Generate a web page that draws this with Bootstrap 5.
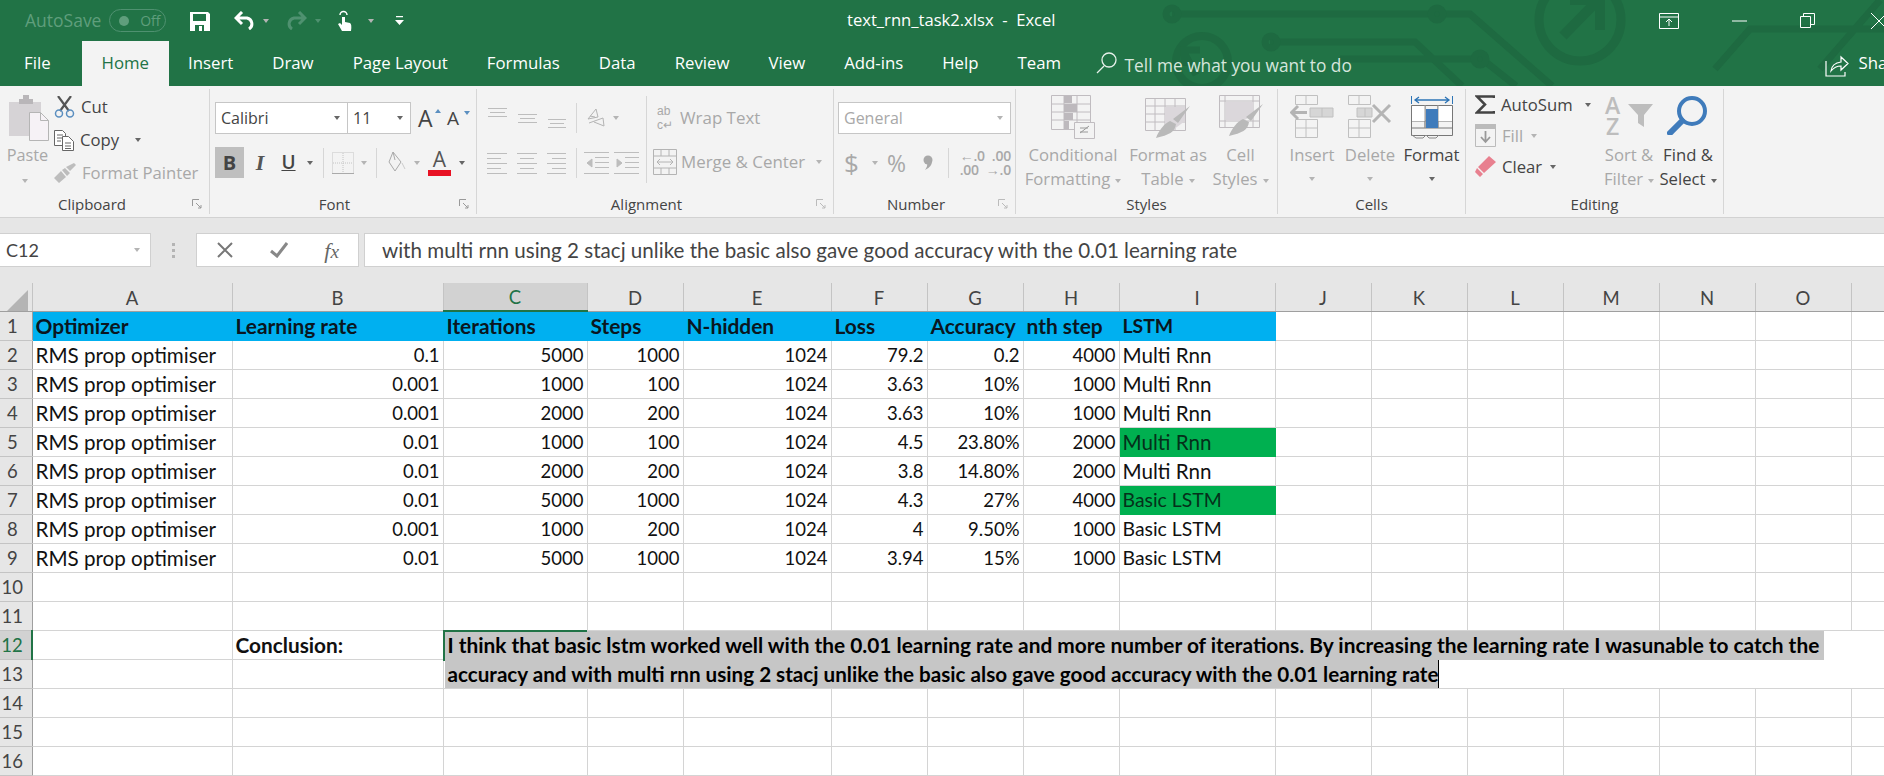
<!DOCTYPE html>
<html lang="en"><head><meta charset="utf-8"><title>text_rnn_task2.xlsx - Excel</title>
<link href="https://cdn.jsdelivr.net/npm/bootstrap@5.3.0/dist/css/bootstrap.min.css" rel="stylesheet">
<style>
html,body{height:776px;overflow:hidden}
body{width:1884px;background:#fff;font-family:"Open Sans","Noto Sans",sans-serif;font-size:16.7px;color:#444}
svg{flex:none;display:block}
.xl-head{background:#217346;height:86px;color:#fff;overflow:hidden}
.xl-deco{position:absolute;left:0;top:0;pointer-events:none}
.xl-title{height:41px;position:relative}
.xl-qa{width:847px;padding-left:25px;flex:none}
.xl-auto{color:#5f9e7c;font-size:17.5px}
.xl-pill{width:57px;height:23px;border:1px solid #4f9170;border-radius:12px;margin-left:8px;color:#5f9e7c;font-size:14px;padding:0 5px 0 9px}
.xl-pill i{width:10px;height:10px;border-radius:50%;background:#5f9e7c;display:block}
.xl-doc{font-size:16.6px;white-space:pre}
.xl-win{margin-left:auto}
.xl-tabs{height:45px;position:relative;font-size:16.8px;padding-left:4.5px}
.xl-tab{padding:0 19.5px;height:45px;line-height:44px;white-space:nowrap;flex:none}
.xl-tab.first{margin-right:12px}
.xl-tab.on{background:#f3f3f3;color:#217346}
.xl-ask{color:#d6e6dd;font-size:17.3px;margin-left:8px;width:700px;line-height:50px;flex:none}
.xl-share{font-size:16.8px;margin-left:10px;white-space:nowrap;line-height:44px;flex:none}
.xl-ribbon{height:132px;background:#f3f3f3;border-bottom:1px solid #d2d2d2;padding-top:3px}
.rb-g{height:125px;border-right:1px solid #d6d6d6;flex:none}
.rb-body{height:105px}
.rb-label{height:20px;line-height:20px;font-size:15px;color:#444}
.rb-label span{flex:1;text-align:center}
.rb-label svg{margin:5px 7px 0 0}
.w-clip{width:210px}.w-font{width:267px}.w-align{width:357px}.w-num{width:182px}.w-sty{width:262px}.w-cell{width:188px}.w-edit{width:258px}
.lbl-clip span{padding-right:8px}
.off{color:#a8a8a8}
.cr{display:block;flex:none;width:0;height:0;border:3.5px solid transparent;border-top:4px solid #666;border-bottom:0}
.cr.lt{border-top-color:#b4b4b4}
.sp{width:1px;height:30px;background:#d6d6d6;flex:none}
.paste-col{width:54px;padding-left:1px;flex:none}
.paste-col svg{margin:6px 0 0 7px}
.paste-t{margin-top:4px;line-height:20px;text-align:center;font-size:16.3px}
.paste-col .cr{margin:14px 0 0 21px}
.clip-rows{padding-top:1px}
.clip-row{height:33px;white-space:nowrap}
.clip-row .tx{margin-left:6px}
.row-a{height:32px;margin-top:13px}
.row-b{height:31px;margin-top:13px}
.combo{height:32px;border:1px solid #c6c6c6;background:#fff;font-size:16px;padding:0 7px 0 5px;justify-content:space-between;flex:none}
.c-font{width:133px}.c-size{width:64px;margin-left:-1px}.c-num{width:173px;color:#a8a8a8}
.big-a{font-size:23px;line-height:1;width:20px;position:relative;color:#444}
.small-a{font-size:19px;line-height:1;width:18px;color:#444;position:relative}
.tip{position:absolute;right:-3px;top:2px;width:0;height:0;border:3px solid transparent;border-bottom:4px solid #5b8fc0;border-top:0}
.tip.dn{border-bottom:0;border-top:4px solid #5b8fc0;right:-5px}
.b-b{width:29px;height:31px;background:#bfbfbf;font-weight:700;font-size:20px;color:#444;line-height:31px;text-align:center}
.b-i{width:16px;font-family:"Liberation Serif",serif;font-style:italic;font-weight:700;font-size:22px;text-align:center;color:#555}
.b-u{width:15px;font-size:19px;font-weight:600;text-decoration:underline;text-align:center;color:#444}
.a-red{width:23px;height:31px;text-align:center;font-size:21px;line-height:25px;color:#555;position:relative}
.a-red:after{content:"";position:absolute;left:0;right:0;bottom:2px;height:6px;background:#e81123}
.al-left{width:169px;padding-left:10px;flex:none}
.al-right{border-left:1px solid #d6d6d6;height:87px;margin-top:7px;flex:1;font-size:16.9px;white-space:nowrap}
.al-right .row-a{margin-top:6px}.al-right .row-b{margin-top:12px}
.abc{width:20px;font-family:"Liberation Sans",sans-serif;font-size:12px;line-height:14px;color:#a8a8a8;flex:none}
.dollar{font-size:26px;color:#a8a8a8;line-height:30px;width:15px}
.pct{font-size:23px;color:#a8a8a8;line-height:30px;width:22px}
.dec{font-size:14px;font-weight:600;color:#a8a8a8;line-height:14px;white-space:pre;text-align:right;width:54px;letter-spacing:-.2px}
.bigbtn{flex:none;text-align:center;line-height:24px;white-space:nowrap}
.bigbtn .ico{height:54px;padding-top:6px}
.bigbtn .ico svg{margin:0 auto}
.bigbtn .cr{display:inline-block;vertical-align:middle;margin-left:5px}
.bigbtn .solo{display:block;margin:10px auto 0}
.w108{width:108px}.w82{width:82px}.w63{width:63px}.w58{width:58px}.w60{width:60px}.w65{width:65px}
.st-pad{padding-left:3px}.ce-pad{padding-left:5px}
.ed-rows{width:134px;padding-left:9px;flex:none}
.ed-row{height:31px;white-space:nowrap}
.ed-row .tx{margin-left:6px}
.sortico{justify-content:center;padding-left:3px}
.az{font-size:23px;line-height:21px;font-weight:600;color:#bdbdbd;width:19px;text-align:center}
.xl-fbar{height:65px;background:#e6e6e6;padding-top:15px;font-family:Lato,sans-serif;font-size:20.6px;color:#444}
.fb-box{height:34px;background:#fff;border:1px solid #d0d0d0;flex:none}
.fb-name{width:151px;border-left:0;padding:0 10px 0 6px;justify-content:space-between;font-size:18px}
.fb-dots{width:45px;height:34px;flex:none}
.fb-btns{width:163px;justify-content:space-between;padding:0 19px 0 20px}
.fb-input{margin-left:5px;flex:1;padding-left:17px;border-right:0;white-space:nowrap}
.fx{font-family:"Liberation Serif",serif;font-style:italic;font-size:22px;color:#666}
.xl-sheet{table-layout:fixed;width:1884px;margin:0;border-collapse:collapse;font-family:Lato,sans-serif;font-size:20.6px;color:#000}
.xl-sheet th,.xl-sheet td{padding:0 3px;height:29px;line-height:28px;background-color:#fff;border:0;border-right:1px solid #d4d4d4;border-bottom:1px solid #d4d4d4;box-shadow:none;white-space:nowrap;font-weight:400;color:#111}
.xl-sheet tr.hd th{height:28px;line-height:26px;background-color:#e6e6e6;border-right-color:#c4c4c4;border-bottom:1px solid #9f9f9f;text-align:center;color:#444;font-size:18.5px;padding:0}
.xl-sheet tr.hd th.sel{background-color:#d2d2d2;border-bottom:2px solid #217346;color:#217346}
.xl-sheet th.rh{background-color:#e6e6e6;border-right:1px solid #9f9f9f;border-bottom-color:#c4c4c4;color:#444;text-align:center;padding:0 7px 0 0;font-size:18.5px}
.xl-sheet th.rh.sel{background-color:#d2d2d2;border-right:2px solid #217346;color:#217346}
.xl-sheet td.num{text-align:right;padding-right:3px;font-size:18.5px}
.xl-sheet td.bl{background-color:#00b0f0;border-color:#00b0f0;font-weight:700;color:#0a1620;font-size:20.9px}
.xl-sheet td.gr{background-color:#00b050;border-color:#00b050;color:#05301a}
.xl-sheet td.b{font-weight:700;font-size:20.8px}
.xl-sheet td.cap{font-size:19.4px}
.xl-sheet td.merged{vertical-align:top;padding:0 0 0 1px;position:relative;font-weight:700;border-right:0}
.active-t{position:absolute;left:-1px;top:-1px;width:144px;height:2px;background:#217346}
.active-l{position:absolute;left:-1px;top:-1px;width:2px;height:31px;background:#217346}
.seltx{display:block;width:fit-content;height:29px;line-height:28px;background:#c6c6c6;padding:0 5px 0 3px;color:#000;font-size:20.87px}
.seltx.two{height:28px;border-right:1px solid #000;padding-right:0;font-size:20.65px}
.corner{width:0;height:0;border-style:solid;border-width:0 0 21px 21px;border-color:transparent transparent #b4b4b4 transparent;margin:3px 0 0 7px}
.c32{width:32px}.c200{width:200px}.c211{width:211px}.c144{width:144px}.c96{width:96px}.c148{width:148px}.c156{width:156px}.c33{width:33px}
.g3{margin-left:3px}.g4{margin-left:4px}.g5{margin-left:5px}.g6{margin-left:6px}.g7{margin-left:7px}.g8{margin-left:8px}.g9{margin-left:9px}.g10{margin-left:10px}.g11{margin-left:11px}.g12{margin-left:12px}.g13{margin-left:13px}.g14{margin-left:14px}.g15{margin-left:15px}.g17{margin-left:17px}.g21{margin-left:21px}
.xl-p5{padding-left:5px}.xl-p4{padding-left:4px}
.xl-gap1{margin-left:53px}.xl-gap2{margin-left:53px}.xl-gap3{margin-left:55px;margin-right:-3px}
.xl-dim{border-top-color:#4f9170}
.xl-mag{margin:11px 0 0 15px}
.xl-shr{margin-top:11px}
</style></head><body>
<header class="xl-head position-relative">
<svg class="xl-deco" width="1884" height="86" fill="none" stroke="#1e6a41" stroke-width="7"><path d="M1172 14H1470L1552 86M1270 42H1415L1462 86M1340 59H1482L1516 86"/><circle cx="1172" cy="14" r="6"/><circle cx="1437" cy="14" r="6"/><circle cx="1271" cy="42" r="6"/><circle cx="1480" cy="59" r="6"/><circle cx="1580" cy="20" r="41" stroke-width="9"/><circle cx="1202" cy="62" r="26" stroke-width="8"/><path d="M1563 36L1598 0M1570 0H1600V30" stroke-width="10"/><path d="M1196 75L1184 52M1184 66V50H1200" stroke-width="7"/><path d="M1715 69L1750 29H1884M1820 69L1880 0"/></svg>
<div class="xl-title d-flex align-items-center">
<div class="xl-qa d-flex align-items-center">
<span class="xl-auto">AutoSave</span>
<span class="xl-pill d-flex align-items-center justify-content-between"><i></i>Off</span>
<svg class="ms-4" width="20" height="20" viewBox="0 0 20 20"><path fill="#fff" d="M0 1h18l2 2v17H0z"/><path fill="#217346" d="M3 3h13v7H3zM5 14h9v6H5z"/><path fill="#fff" d="M9 15h3v5H9z"/></svg>
<svg class="ms-4" width="21" height="19" viewBox="0 0 21 19" fill="none" stroke="#fff" stroke-width="3"><path d="M8 1L2 7l6 6M2 7h11a6 6 0 0 1 2 11"/></svg>
<span class="cr lt ms-2"></span>
<svg class="g17" width="21" height="19" viewBox="0 0 21 19" fill="none" stroke="#4f9170" stroke-width="3"><path d="M13 1l6 6-6 6M19 7H8a6 6 0 0 0-2 11"/></svg>
<span class="cr ms-2 xl-dim"></span>
<svg class="ms-3" width="15" height="21" viewBox="0 0 15 21" fill="#fff"><path d="M5 7h3v5l5 1q2 1 1 8H5L1 14l2-1 2 2z"/><path d="M3 5a3.500 3.500 0 1 1 7 0" fill="none" stroke="#fff" stroke-width="1.500"/></svg>
<span class="cr lt ms-3"></span>
<svg class="g21" width="9" height="9" viewBox="0 0 9 9" fill="#fff"><path d="M1 0h7v1.200H1zM0 4h9L4.500 9z"/></svg>
</div>
<span class="xl-doc">text_rnn_task2.xlsx  -  Excel</span>
<div class="xl-win d-flex align-items-center">
<svg width="20" height="16" viewBox="0 0 20 16" fill="none" stroke="#fff"><path d="M.5.500h19v15H.5zM.5 4h19M10 13V6M7 9l3-3 3 3"/></svg>
<svg width="15" height="2" viewBox="0 0 15 2" class="xl-gap1"><path d="M0 1h15" stroke="#fff"/></svg>
<svg width="15" height="15" viewBox="0 0 15 15" fill="none" stroke="#fff" class="xl-gap2"><path d="M.5 3.500h10v11H.5zM3.500 3.500v-3h11v11h-4"/></svg>
<svg width="17" height="16" viewBox="0 0 17 16" fill="none" stroke="#fff" class="xl-gap3"><path d="M1 0l16 16M17 0L1 16"/></svg>
</div></div>
<nav class="xl-tabs d-flex align-items-start">
<span class="xl-tab first">File</span><span class="xl-tab on">Home</span><span class="xl-tab">Insert</span><span class="xl-tab">Draw</span><span class="xl-tab">Page Layout</span><span class="xl-tab">Formulas</span><span class="xl-tab">Data</span><span class="xl-tab">Review</span><span class="xl-tab">View</span><span class="xl-tab">Add-ins</span><span class="xl-tab">Help</span><span class="xl-tab">Team</span>
<svg class="xl-mag" width="21" height="22" viewBox="0 0 21 22" fill="none" stroke="#e6f0ea" stroke-width="1.300"><circle cx="13" cy="8" r="7"/><path d="M8 14L1 21"/></svg>
<span class="xl-ask">Tell me what you want to do</span>
<svg class="xl-shr" width="24" height="25" viewBox="0 0 24 25" fill="none" stroke="#fff" stroke-width="1.200"><path d="M1 9v15h19v-4M6 19q1-8 10-9V5l7 6.500-7 6.500v-4q-6 0-10 5z"/></svg>
<span class="xl-share">Share</span>
</nav>
</header>

<section class="xl-ribbon d-flex">
<div class="rb-g w-clip d-flex flex-column">
<div class="rb-body d-flex">
<div class="paste-col">
<svg width="41" height="46" viewBox="0 0 41 46"><path fill="#d6d3d6" d="M1 7h12V4h3V0h5v4h3v3h9v34H1z"/><path fill="#b9b6b9" d="M11 4h14v5H11zM15 0h6v5h-6z"/><path fill="#f6f2f6" stroke="#b5b5b5" d="M21.500 17.500h11l8 8v20h-19z"/><path fill="none" stroke="#b5b5b5" d="M32.500 17.500v8h8"/></svg>
<div class="paste-t off">Paste</div><span class="cr lt"></span>
</div>
<div class="clip-rows">
<div class="clip-row d-flex align-items-center"><svg width="21" height="22" viewBox="0 0 21 22" fill="none"><path d="M4 0l11 15M17 0L6 15" stroke="#555" stroke-width="2.200"/><circle cx="5" cy="17.500" r="3.500" stroke="#5b8fc0" stroke-width="1.500"/><circle cx="16" cy="17.500" r="3.500" stroke="#5b8fc0" stroke-width="1.500"/></svg><span class="tx">Cut</span></div>
<div class="clip-row d-flex align-items-center"><svg width="20" height="22" viewBox="0 0 20 22" fill="#fff" stroke="#666"><path d="M.5 1.500h8l3 3v12H.5z"/><path d="M8.500 7.500h6l5 5v9h-11z"/><path d="M3 6h6M3 9h6M3 12h4M11 14h6M11 17h6M11 19.500h6" fill="none"/></svg><span class="tx">Copy</span><span class="cr ms-3"></span></div>
<div class="clip-row d-flex align-items-center off"><svg width="22" height="20" viewBox="0 0 22 20" fill="#bdbdbd"><path d="M0 15l5 5 7-6-5-6zM8 7l5 6 3-3-5-5zM12 4l4 4 6-6-2-2z"/></svg><span class="tx">Format Painter</span></div>
</div></div>
<div class="rb-label lbl-clip d-flex"><span>Clipboard</span><svg width="10" height="10" viewBox="0 0 10 10" fill="none" stroke="#999"><path d="M.5 7V.5H7M4 4l5 5M6 9h3V6"/></svg></div>
</div>
<div class="rb-g w-font d-flex flex-column">
<div class="rb-body xl-p5">
<div class="row-a d-flex align-items-center">
<div class="combo c-font d-flex align-items-center">Calibri<span class="cr"></span></div>
<div class="combo c-size d-flex align-items-center">11<span class="cr"></span></div>
<span class="big-a g7 d-block">A<i class="tip"></i></span><span class="small-a g9 d-block">A<i class="tip dn"></i></span>
</div>
<div class="row-b d-flex align-items-center">
<span class="b-b">B</span><span class="b-i g8">I</span><span class="b-u g13">U</span><span class="cr g11"></span><span class="sp g10"></span>
<svg class="g8" width="22" height="22" viewBox="0 0 22 22" fill="none" stroke="#c4c4c4" stroke-dasharray="1 1"><path d="M.5.500h21v21H.5zM11 1v20M1 11h20"/><path d="M0 21.500h22" stroke-dasharray="none" stroke="#aaa"/></svg>
<span class="cr lt g7"></span><span class="sp g9"></span>
<svg class="g11" width="22" height="24" viewBox="0 0 22 24" fill="none" stroke="#aaa"><path d="M5 1l8 10-6 9-6-9zM5 1l2 8"/><path d="M14 12l3 6" stroke="#ccc"/></svg>
<span class="cr lt g4"></span><span class="a-red g8">A</span><span class="cr g8"></span>
</div></div>
<div class="rb-label d-flex"><span>Font</span><svg width="10" height="10" viewBox="0 0 10 10" fill="none" stroke="#999"><path d="M.5 7V.5H7M4 4l5 5M6 9h3V6"/></svg></div>
</div>
<div class="rb-g w-align d-flex flex-column">
<div class="rb-body d-flex">
<div class="al-left">
<div class="row-a d-flex align-items-center">
<svg width="79" height="24" viewBox="0 0 79 24" fill="none" stroke="#bdbdbd"><path d="M1 2.500h19M3 6.500h15M1 10.500h19M31 8.500h19M33 12.500h15M31 16.500h19M61 13.500h18M63 17.500h14M61 21.500h18"/></svg>
<span class="sp g10"></span>
<svg class="g9" width="20" height="22" viewBox="0 0 20 22" fill="none" stroke="#b4b4b4"><path d="M2 12L10 2l2 8zM4 9l5 1M3 16l14-5 1 8M18 19L8 15"/></svg>
<span class="cr lt g7"></span></div>
<div class="row-b d-flex align-items-center">
<svg width="79" height="24" viewBox="0 0 79 24" fill="none" stroke="#bdbdbd"><path d="M0 2.500h20M0 7.500h14M0 12.500h20M0 17.500h14M0 22.500h20M30 2.500h20M33 7.500h14M30 12.500h20M33 17.500h14M30 22.500h20M60 2.500h19M65 7.500h14M60 12.500h19M65 17.500h14M60 22.500h19"/></svg>
<span class="sp g10"></span>
<svg class="g7" width="25" height="24" viewBox="0 0 25 24" fill="none" stroke="#bdbdbd"><path d="M0 1.500h25M11 6.500h14M11 11.500h14M11 16.500h14M0 22.500h25"/><path d="M8 8v8l-5-4z" fill="#bdbdbd"/></svg>
<svg class="g5" width="25" height="24" viewBox="0 0 25 24" fill="none" stroke="#bdbdbd"><path d="M0 1.500h25M11 6.500h14M11 11.500h14M11 16.500h14M0 22.500h25"/><path d="M3 8v8l5-4z" fill="#bdbdbd"/></svg>
</div></div>
<div class="al-right off">
<div class="row-a d-flex align-items-center"><span class="abc g10">ab<br>c&#8629;</span><span class="g3">Wrap Text</span></div>
<div class="row-b d-flex align-items-center"><svg class="g6" width="24" height="26" viewBox="0 0 24 26" fill="none" stroke="#b4b4b4"><path d="M.5.500h23v25H.5zM.5 7h23M.5 19h23M8 .5V7M16 .5V7M8 19v7M16 19v7M4 13h16M7 10l-3 3 3 3M17 10l3 3-3 3"/></svg><span class="g4">Merge &amp; Center</span><span class="cr lt g11"></span></div>
</div></div>
<div class="rb-label d-flex"><span>Alignment</span><svg width="10" height="10" viewBox="0 0 10 10" fill="none" stroke="#bbb"><path d="M.5 7V.5H7M4 4l5 5M6 9h3V6"/></svg></div>
</div>
<div class="rb-g w-num d-flex flex-column">
<div class="rb-body xl-p4">
<div class="row-a d-flex align-items-center"><div class="combo c-num d-flex align-items-center">General<span class="cr lt"></span></div></div>
<div class="row-b d-flex align-items-center">
<span class="dollar g6">$</span><span class="cr lt g13"></span><span class="pct g9">%</span>
<svg class="g14" width="10" height="15" viewBox="0 0 10 15" fill="#a8a8a8"><circle cx="5" cy="5" r="4.500"/><path d="M9 6q0 6-7 9 3-4 2-7z"/></svg>
<span class="sp g15"></span>
<div class="dec g8">&#8592;.0  .00
.00  &#8594;.0</div>
</div></div>
<div class="rb-label d-flex"><span>Number</span><svg width="10" height="10" viewBox="0 0 10 10" fill="none" stroke="#bbb"><path d="M.5 7V.5H7M4 4l5 5M6 9h3V6"/></svg></div>
</div>
<div class="rb-g w-sty d-flex flex-column">
<div class="rb-body d-flex st-pad off">
<div class="bigbtn w108"><div class="ico"><svg width="44" height="44" viewBox="0 0 44 44" fill="none" stroke="#c0bcc0"><path d="M.5.500h39v34H.5zM.5 9h39M.5 17h39M.5 25h39M13 .5v34M26 .5v34"/><path fill="#bdb9bd" stroke="none" d="M13 1h8v7h-8zM13 9h13v8H13zM13 18h9v7h-9zM13 26h5v8h-5z"/><path fill="#f3f3f3" d="M23.500 27.500h20v16h-20z"/><path d="M29 38l9-7M29 33h8M29 37h8" stroke="#999"/></svg></div><div>Conditional</div><div>Formatting<span class="cr lt"></span></div></div>
<div class="bigbtn w82"><div class="ico"><svg width="46" height="44" viewBox="0 0 46 44" fill="none" stroke="#c0bcc0"><path d="M.5 3.500h40v32H.5zM.5 11h40M.5 19h40M.5 27h40M10 3v32M20 3v32M30 3v32"/><path fill="#dbd7db" stroke="none" d="M20 12h20v14L28 35h-8z"/><path fill="#b9b9b9" stroke="none" d="M45 11L33 28l-5-4zM31 29c-1 8-7 11-20 14 3-8 8-14 14-17z"/></svg></div><div>Format as</div><div>Table<span class="cr lt"></span></div></div>
<div class="bigbtn w63"><div class="ico"><svg width="44" height="44" viewBox="0 0 44 44" fill="none" stroke="#c0bcc0"><path d="M.5.500h40v32H.5zM.5 6h40M.5 26h40M6 0v33M34 0v33"/><path fill="#dbd7db" stroke="none" d="M7 7h27v13L24 26H7z"/><path fill="#b9b9b9" stroke="none" d="M44 9L32 26l-5-4zM30 27c-1 8-7 11-20 14 3-8 8-14 14-17z"/></svg></div><div>Cell</div><div>Styles<span class="cr lt"></span></div></div>
</div>
<div class="rb-label d-flex"><span>Styles</span></div>
</div>
<div class="rb-g w-cell d-flex flex-column">
<div class="rb-body d-flex ce-pad">
<div class="bigbtn w58 off"><div class="ico"><svg width="44" height="44" viewBox="0 0 44 44" fill="none" stroke="#c0c0c0"><path d="M5.500.500h22v9h-22zM16 0v10M5.500 24.500h22v18h-22zM5.500 33h22M16 24v19"/><path d="M20 13h23v9H20zM32 13v9" fill="#d6d6d6"/><path d="M17 17.500H2M8 11l-6.500 6.500L8 24" stroke="#b4b4b4" stroke-width="3"/></svg></div><div>Insert</div><span class="cr lt solo"></span></div>
<div class="bigbtn w58 off"><div class="ico"><svg width="44" height="44" viewBox="0 0 44 44" fill="none" stroke="#c0c0c0"><path d="M.5.500h22v9H.5zM11 0v10M.5 24.500h22v18H.5zM.5 33h22M11 24v19"/><path d="M9 13h15v9H9zM17 13v9" fill="#d6d6d6"/><path d="M25 10l17 17M42 10L25 27" stroke="#b4b4b4" stroke-width="3"/></svg></div><div>Delete</div><span class="cr lt solo"></span></div>
<div class="bigbtn w65"><div class="ico"><svg width="42" height="44" viewBox="0 0 42 44" fill="none" stroke="#777"><path d="M.5 1v8M41.500 1v8" stroke="#2e75b6"/><path d="M4 5h34M8 2L4 5l4 3M34 2l4 3-4 3" stroke="#2e75b6" stroke-width="1.300"/><path d="M.5 10.500h41v30H.5zM.5 33h41M.5 26h41M14 10v23M27 10v23"/><path fill="#fff" stroke="none" d="M1 11h13v15H1zM27 11h14v15H27z"/><path d="M14 10v23M27 10v23" stroke="#999"/><path fill="#3f7bbb" stroke="none" d="M15 14h12v19H15z"/><path d="M1 40l4 3h7l3-3M15 40l3 3h7l3-3" stroke="#888"/></svg></div><div>Format</div><span class="cr solo"></span></div>
</div>
<div class="rb-label d-flex"><span>Cells</span></div>
</div>
<div class="rb-g w-edit d-flex flex-column">
<div class="rb-body d-flex">
<div class="ed-rows">
<div class="ed-row d-flex align-items-center"><svg width="20" height="19" viewBox="0 0 20 19" fill="none" stroke="#444" stroke-width="2.500"><path d="M19 3V1.500H2L10 9.500 2 17.500H19V16"/></svg><span class="tx">AutoSum</span><span class="cr g12"></span></div>
<div class="ed-row d-flex align-items-center off"><svg width="21" height="23" viewBox="0 0 21 23" fill="none" stroke="#bbb"><path d="M.5.500h20v22H.5z"/><path fill="#bbb" d="M.5.500h20v4H.5z"/><path d="M10.500 7v11M6 13l4.500 5 4.500-5" stroke="#999" stroke-width="1.800"/></svg><span class="tx">Fill</span><span class="cr lt ms-2"></span></div>
<div class="ed-row d-flex align-items-center"><svg width="21" height="21" viewBox="0 0 21 21" fill="#e8808f"><path d="M14 0l7 6L9 17 3 11zM2 12l6 6-3 3-5-5z"/></svg><span class="tx">Clear</span><span class="cr ms-2"></span></div>
</div>
<div class="bigbtn w58 off"><div class="ico d-flex sortico"><span class="az">A<br>Z</span><svg width="25" height="25" viewBox="0 0 25 25" fill="#bdbdbd" class="mt-2"><path d="M0 1h25L16 12v12l-6-4v-8z"/></svg></div><div>Sort &amp;</div><div>Filter<span class="cr lt"></span></div></div>
<div class="bigbtn w60"><div class="ico"><svg width="42" height="40" viewBox="0 0 42 40" fill="none" stroke="#3f7bbb"><circle cx="25" cy="16" r="13" stroke-width="4"/><path d="M15 26L3 38" stroke-width="6" stroke-linecap="round"/></svg></div><div>Find &amp;</div><div>Select<span class="cr"></span></div></div>
</div>
<div class="rb-label d-flex"><span>Editing</span></div>
</div>
</section>

<section class="xl-fbar d-flex">
<div class="fb-box fb-name d-flex align-items-center">C12<span class="cr lt"></span></div>
<div class="fb-dots d-flex align-items-center justify-content-center"><svg width="4" height="15" viewBox="0 0 4 15" fill="#b4b4b4"><path d="M0 0h3v3H0zM0 6h3v3H0zM0 12h3v3H0z"/></svg></div>
<div class="fb-box fb-btns d-flex align-items-center"><svg width="16" height="16" viewBox="0 0 16 16" stroke="#777" stroke-width="2"><path d="M1 1l14 14M15 1L1 15"/></svg><svg width="18" height="16" viewBox="0 0 18 16" fill="none" stroke="#888" stroke-width="3"><path d="M1 9l6 5L17 1"/></svg><span class="fx">f<small>x</small></span></div>
<div class="fb-box fb-input d-flex align-items-center">with multi rnn using 2 stacj unlike the basic also gave good accuracy with the 0.01 learning rate</div>
</section>

<table class="table xl-sheet">
<colgroup><col class="c32"><col class="c200"><col class="c211"><col class="c144"><col class="c96"><col class="c148"><col class="c96"><col class="c96"><col class="c96"><col class="c156"><col class="c96"><col class="c96"><col class="c96"><col class="c96"><col class="c96"><col class="c96"><col class="c33"></colgroup>
<thead><tr class="hd"><th><div class="corner"></div></th><th>A</th><th>B</th><th class="sel">C</th><th>D</th><th>E</th><th>F</th><th>G</th><th>H</th><th>I</th><th>J</th><th>K</th><th>L</th><th>M</th><th>N</th><th>O</th><th></th></tr></thead>
<tbody>
<tr><th class="rh">1</th><td class="bl">Optimizer</td><td class="bl">Learning rate</td><td class="bl">Iterations</td><td class="bl">Steps</td><td class="bl">N-hidden</td><td class="bl">Loss</td><td class="bl">Accuracy</td><td class="bl">nth step</td><td class="bl cap">LSTM</td><td></td><td></td><td></td><td></td><td></td><td></td><td></td></tr>
<tr><th class="rh">2</th><td>RMS prop optimiser</td><td class="num">0.1</td><td class="num">5000</td><td class="num">1000</td><td class="num">1024</td><td class="num">79.2</td><td class="num">0.2</td><td class="num">4000</td><td>Multi Rnn</td><td></td><td></td><td></td><td></td><td></td><td></td><td></td></tr>
<tr><th class="rh">3</th><td>RMS prop optimiser</td><td class="num">0.001</td><td class="num">1000</td><td class="num">100</td><td class="num">1024</td><td class="num">3.63</td><td class="num">10%</td><td class="num">1000</td><td>Multi Rnn</td><td></td><td></td><td></td><td></td><td></td><td></td><td></td></tr>
<tr><th class="rh">4</th><td>RMS prop optimiser</td><td class="num">0.001</td><td class="num">2000</td><td class="num">200</td><td class="num">1024</td><td class="num">3.63</td><td class="num">10%</td><td class="num">1000</td><td>Multi Rnn</td><td></td><td></td><td></td><td></td><td></td><td></td><td></td></tr>
<tr><th class="rh">5</th><td>RMS prop optimiser</td><td class="num">0.01</td><td class="num">1000</td><td class="num">100</td><td class="num">1024</td><td class="num">4.5</td><td class="num">23.80%</td><td class="num">2000</td><td class="gr">Multi Rnn</td><td></td><td></td><td></td><td></td><td></td><td></td><td></td></tr>
<tr><th class="rh">6</th><td>RMS prop optimiser</td><td class="num">0.01</td><td class="num">2000</td><td class="num">200</td><td class="num">1024</td><td class="num">3.8</td><td class="num">14.80%</td><td class="num">2000</td><td>Multi Rnn</td><td></td><td></td><td></td><td></td><td></td><td></td><td></td></tr>
<tr><th class="rh">7</th><td>RMS prop optimiser</td><td class="num">0.01</td><td class="num">5000</td><td class="num">1000</td><td class="num">1024</td><td class="num">4.3</td><td class="num">27%</td><td class="num">4000</td><td class="gr cap">Basic LSTM</td><td></td><td></td><td></td><td></td><td></td><td></td><td></td></tr>
<tr><th class="rh">8</th><td>RMS prop optimiser</td><td class="num">0.001</td><td class="num">1000</td><td class="num">200</td><td class="num">1024</td><td class="num">4</td><td class="num">9.50%</td><td class="num">1000</td><td class="cap">Basic LSTM</td><td></td><td></td><td></td><td></td><td></td><td></td><td></td></tr>
<tr><th class="rh">9</th><td>RMS prop optimiser</td><td class="num">0.01</td><td class="num">5000</td><td class="num">1000</td><td class="num">1024</td><td class="num">3.94</td><td class="num">15%</td><td class="num">1000</td><td class="cap">Basic LSTM</td><td></td><td></td><td></td><td></td><td></td><td></td><td></td></tr>
<tr><th class="rh">10</th><td></td><td></td><td></td><td></td><td></td><td></td><td></td><td></td><td></td><td></td><td></td><td></td><td></td><td></td><td></td><td></td></tr>
<tr><th class="rh">11</th><td></td><td></td><td></td><td></td><td></td><td></td><td></td><td></td><td></td><td></td><td></td><td></td><td></td><td></td><td></td><td></td></tr>
<tr><th class="rh sel">12</th><td></td><td class="b">Conclusion:</td><td class="merged" colspan="14" rowspan="2"><i class="active-t"></i><i class="active-l"></i><span class="seltx">I think that basic lstm worked well with the 0.01 learning rate and more number of iterations. By increasing the learning rate I wasunable to catch the</span><span class="seltx two">accuracy and with multi rnn using 2 stacj unlike the basic also gave good accuracy with the 0.01 learning rate</span></td></tr>
<tr><th class="rh">13</th><td></td><td></td></tr>
<tr><th class="rh">14</th><td></td><td></td><td></td><td></td><td></td><td></td><td></td><td></td><td></td><td></td><td></td><td></td><td></td><td></td><td></td><td></td></tr>
<tr><th class="rh">15</th><td></td><td></td><td></td><td></td><td></td><td></td><td></td><td></td><td></td><td></td><td></td><td></td><td></td><td></td><td></td><td></td></tr>
<tr><th class="rh">16</th><td></td><td></td><td></td><td></td><td></td><td></td><td></td><td></td><td></td><td></td><td></td><td></td><td></td><td></td><td></td><td></td></tr>
</tbody></table>
</body></html>
